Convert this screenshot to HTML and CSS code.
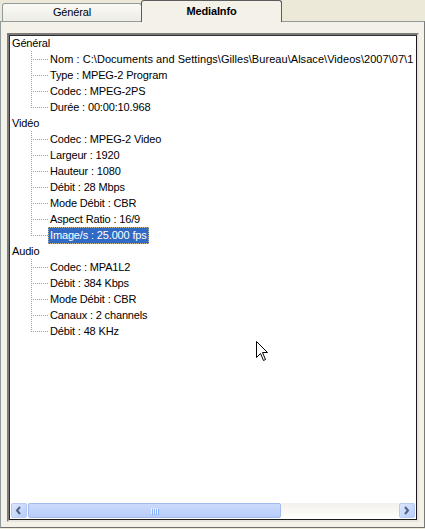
FILE: index.html
```html
<!DOCTYPE html>
<html lang="fr">
<head>
  <meta charset="UTF-8">
  <title>MediaInfo</title>
  <link rel="stylesheet" href="styles.css">
</head>
<body>
  <div class="tabs">
    <div class="tab">Général</div>
    <div class="tab active">MediaInfo</div>
  </div>

  <div class="panel">
    <div class="tree">
      <div class="list">
        <div class="row"><span class="label">Général</span></div>
        <div class="row child"><span class="branch"></span><span class="label path">Nom : C:\Documents and Settings\Gilles\Bureau\Alsace\Videos\2007\07\1</span></div>
        <div class="row child"><span class="branch"></span><span class="label">Type : MPEG-2 Program</span></div>
        <div class="row child"><span class="branch"></span><span class="label">Codec : MPEG-2PS</span></div>
        <div class="row child last"><span class="branch"></span><span class="label">Durée : 00:00:10.968</span></div>

        <div class="row"><span class="label">Vidéo</span></div>
        <div class="row child"><span class="branch"></span><span class="label">Codec : MPEG-2 Video</span></div>
        <div class="row child"><span class="branch"></span><span class="label">Largeur : 1920</span></div>
        <div class="row child"><span class="branch"></span><span class="label">Hauteur : 1080</span></div>
        <div class="row child"><span class="branch"></span><span class="label">Débit : 28 Mbps</span></div>
        <div class="row child"><span class="branch"></span><span class="label">Mode Débit : CBR</span></div>
        <div class="row child"><span class="branch"></span><span class="label">Aspect Ratio : 16/9</span></div>
        <div class="row child last"><span class="branch"></span><span class="label selected">Image/s : 25.000 fps</span></div>

        <div class="row"><span class="label">Audio</span></div>
        <div class="row child"><span class="branch"></span><span class="label">Codec : MPA1L2</span></div>
        <div class="row child"><span class="branch"></span><span class="label">Débit : 384 Kbps</span></div>
        <div class="row child"><span class="branch"></span><span class="label">Mode Débit : CBR</span></div>
        <div class="row child"><span class="branch"></span><span class="label">Canaux : 2 channels</span></div>
        <div class="row child last"><span class="branch"></span><span class="label">Débit : 48 KHz</span></div>
      </div>

      <div class="hscroll">
        <div class="sbtn">
          <svg width="15" height="15" viewBox="0 0 15 15"><path d="M9 4 L6 7.5 L9 11" fill="none" stroke="#4d6185" stroke-width="2"/></svg>
        </div>
        <div class="thumb">
          <svg width="8" height="8" viewBox="0 0 8 8"><path d="M0.5 1v6M2.5 1v6M4.5 1v6M6.5 1v6" stroke="#eef3fe" stroke-width="1"/><path d="M1.5 2v6M3.5 2v6M5.5 2v6M7.5 2v6" stroke="#8cb0f8" stroke-width="1"/></svg>
        </div>
        <div class="track"></div>
        <div class="sbtn">
          <svg width="15" height="15" viewBox="0 0 15 15"><path d="M6 4 L9 7.5 L6 11" fill="none" stroke="#4d6185" stroke-width="2"/></svg>
        </div>
      </div>
    </div>
  </div>

  <svg class="cursor" width="13" height="21" viewBox="0 0 13 21">
    <path d="M0.5 0.5 V16.5 L4.5 12.5 L7.5 19.5 L9.5 18.5 L6.5 11.5 H11.5 Z" fill="#fff" stroke="#000" stroke-width="1"/>
  </svg>
</body>
</html>
```

FILE: styles.css
```css
body {
  margin: 0;
  width: 425px;
  height: 529px;
  overflow: hidden;
  background-color: #ece9d8;
  font-family: "Liberation Sans", Arial, sans-serif;
  font-size: 11px;
  letter-spacing: -0.15px;
  color: #000;
  position: relative;
}

.tabs {
  display: flex;
  height: 22px;
  padding-left: 2px;
  margin-bottom: -1px;
  position: relative;
  z-index: 1;
}

.tab {
  box-sizing: border-box;
  width: 140px;
  height: 18px;
  margin-top: 3px;
  border: 1px solid #919b9c;
  border-bottom: none;
  border-radius: 3px 3px 0 0;
  background: linear-gradient(#fbfaf6, #ecebe4);
  text-align: center;
  line-height: 16px;
}

.tab.active {
  width: 141px;
  height: 22px;
  margin-top: 0;
  margin-left: -1px;
  border-color: #5c5c5c;
  background: #f3f1e8;
  font-weight: bold;
  line-height: 20px;
}

.panel {
  box-sizing: border-box;
  height: 507px;
  border: 1px solid #919b9c;
  border-right-color: #7a7a7a;
  border-bottom-color: #6f6f6f;
  background: #f3f1e8;
  padding: 11px 5px 5px 6px;
}

.tree {
  box-sizing: border-box;
  height: 489px;
  display: flex;
  flex-direction: column;
  background: #fff;
  border: 2px solid;
  border-color: #7a7a7a #e6e4dc #e6e4dc #7a7a7a;
  box-shadow: inset 1px 1px 0 #303030, inset -1px -1px 0 #1a1a1a;
  padding: 0 1px 2px 1px;
}

.list {
  flex: 1;
  overflow: hidden;
  white-space: nowrap;
}

.row {
  display: flex;
  height: 16px;
  line-height: 16px;
}

.label {
  padding: 0 2px;
}

.path {
  letter-spacing: 0.05px;
}

.branch {
  flex: none;
  width: 17px;
  height: 16px;
  margin-left: 21px;
  background-image:
    repeating-linear-gradient(to bottom, #a0a0a0 0 1px, transparent 1px 2px),
    repeating-linear-gradient(to right, #a0a0a0 0 1px, transparent 1px 2px);
  background-size: 1px 100%, 100% 1px;
  background-position: 0 0, 0 8px;
  background-repeat: no-repeat;
}

.last .branch {
  background-size: 1px 9px, 100% 1px;
}

.selected {
  box-sizing: border-box;
  height: 17px;
  background-color: #316ac5;
  color: #fff;
  outline: 1px dotted #c9b98e;
  outline-offset: -1px;
}

.hscroll {
  display: flex;
  height: 15px;
  margin: 0 1px;
  background: linear-gradient(#f3f1ec, #fefefb);
}

.sbtn {
  box-sizing: border-box;
  width: 16px;
  height: 15px;
  border: 1px solid #b7c9f5;
  border-radius: 2px;
  background: linear-gradient(135deg, #dbe6fe, #b9cdf9);
}

.sbtn svg {
  display: block;
  margin: -1px;
}

.thumb {
  box-sizing: border-box;
  width: 253px;
  height: 15px;
  margin-left: 1px;
  border: 1px solid #a4b9ee;
  border-radius: 2px;
  background: linear-gradient(#cbdafc, #b8cdf9);
  display: flex;
  align-items: center;
  justify-content: center;
}

.track {
  flex: 1;
}

.cursor {
  position: absolute;
  left: 256px;
  top: 341px;
}
```
